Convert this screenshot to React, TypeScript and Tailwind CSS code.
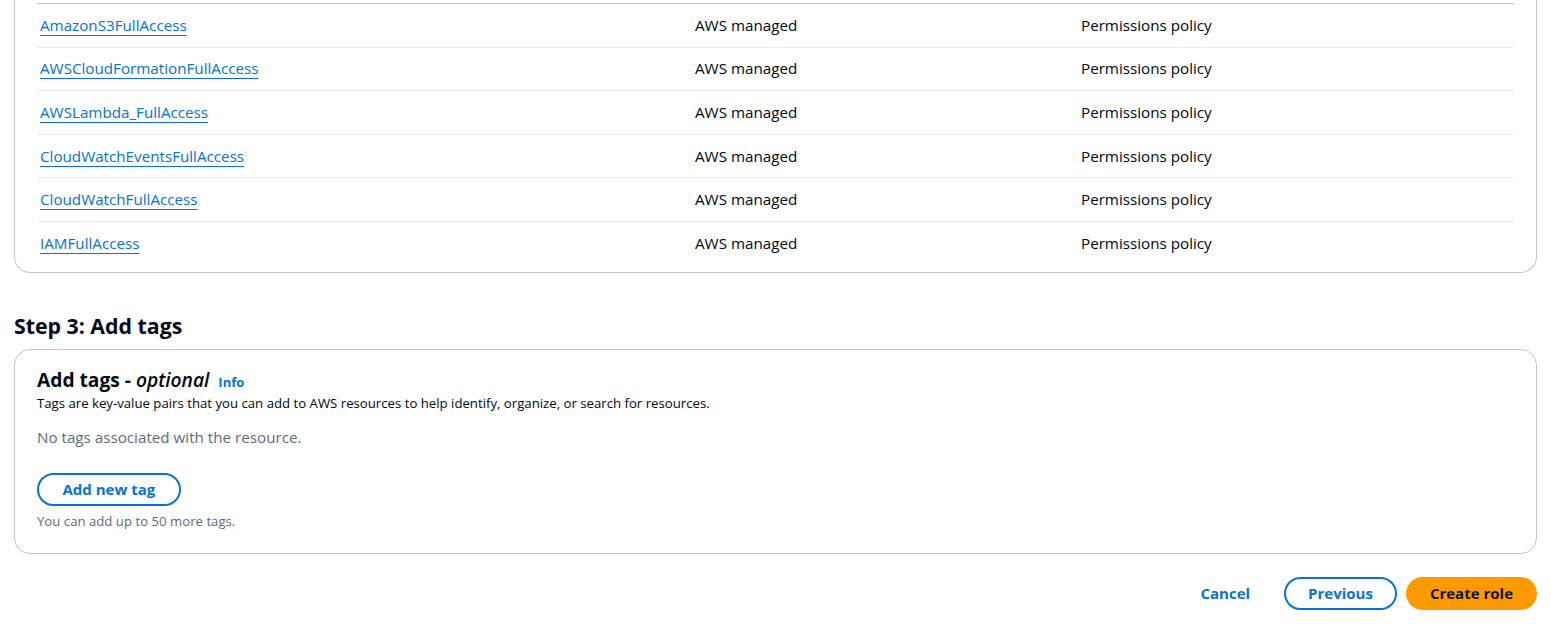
import React from "react";

const policies = [
  "AmazonS3FullAccess",
  "AWSCloudFormationFullAccess",
  "AWSLambda_FullAccess",
  "CloudWatchEventsFullAccess",
  "CloudWatchFullAccess",
  "IAMFullAccess",
];

export default function App() {
  return (
    <div
      className="min-h-[631px] bg-white px-[14px] text-[#000716]"
      style={{ fontFamily: '"Open Sans", "Noto Sans", Arial, sans-serif' }}
    >
      {/* Permissions card (scrolled, top hidden) */}
      <div className="rounded-b-[16px] border-x border-b border-[#c6c6cd] px-[22px] pt-[3px] pb-[6px]">
        <div className="border-t border-[#c6c6cd]">
          {policies.map((p, i) => (
            <div
              key={p}
              className={`grid h-[43.6px] grid-cols-[655px_386px_1fr] items-center text-[15.2px] ${
                i < policies.length - 1 ? "border-b border-[#e9ebed]" : ""
              }`}
            >
              <div className="pl-[3px]">
                <a
                  href="#"
                  className="text-[#0972d3] underline decoration-1 underline-offset-[4px]"
                >
                  {p}
                </a>
              </div>
              <div className="pl-[3px]">AWS managed</div>
              <div className="pl-[3px]">Permissions policy</div>
            </div>
          ))}
        </div>
      </div>

      {/* Step 3 */}
      <h2 className="mt-[39px] mb-[9px] text-[21.3px] font-bold leading-[28px]">Step 3: Add tags</h2>
      <div className="rounded-[16px] border border-[#c6c6cd] px-[22px] pt-[18px] pb-[24px]">
        <div className="flex h-[24px] items-baseline gap-[9px]">
          <span className="text-[19.2px] font-bold leading-[24px]">
            Add tags - <i className="font-semibold">optional</i>
          </span>
          <a href="#" className="text-[13px] font-bold text-[#0972d3]">
            Info
          </a>
        </div>
        <p className="mt-[3px] text-[13.2px] leading-[16px] text-[#000716]">
          Tags are key-value pairs that you can add to AWS resources to help identify, organize, or search for resources.
        </p>
        <p className="mt-[16px] text-[15.2px] leading-[20px] text-[#5f6b7a]">
          No tags associated with the resource.
        </p>
        <button className="mt-[26px] block h-[33px] rounded-full border-2 border-[#0972d3] px-[23.5px] text-[15px] font-bold text-[#0972d3]">
          Add new tag
        </button>
        <p className="mt-[7px] text-[13.2px] leading-[16px] text-[#5f6b7a]">You can add up to 50 more tags.</p>
      </div>

      {/* Footer */}
      <div className="mt-[23px] flex items-center justify-end gap-[9px]">
        <button className="mr-[16px] px-[9px] text-[15px] font-bold text-[#0972d3]">Cancel</button>
        <button className="h-[33px] rounded-full border-2 border-[#0972d3] px-[22px] text-[15px] font-bold text-[#0972d3]">
          Previous
        </button>
        <button className="h-[33px] rounded-full bg-[#ff9900] px-[24px] text-[15px] font-bold text-[#0f141a]">
          Create role
        </button>
      </div>
    </div>
  );
}
